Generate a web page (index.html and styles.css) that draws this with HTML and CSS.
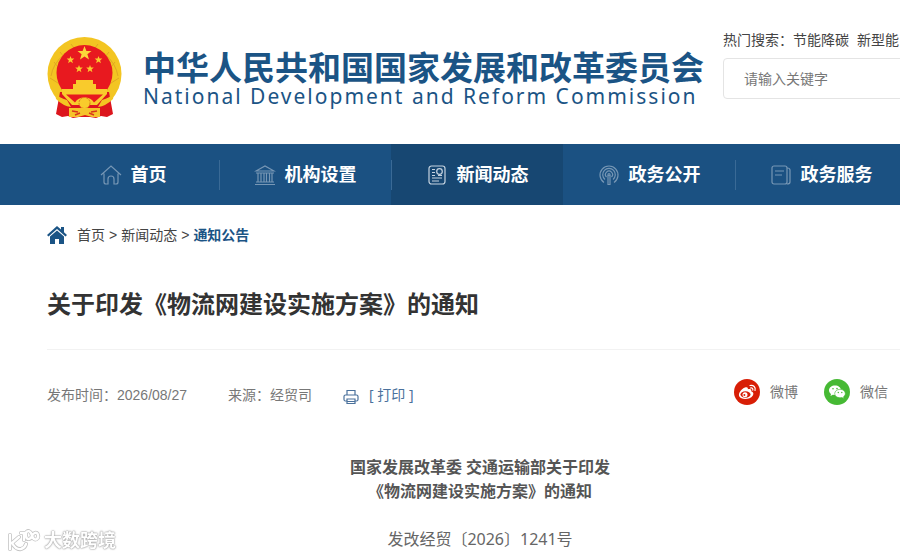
FILE: index.html
```html
<!DOCTYPE html>
<html lang="zh-CN">
<head>
    <meta charset="UTF-8">
    <meta name="viewport" content="width=device-width, initial-scale=1.0">
    <title>关于印发《物流网建设实施方案》的通知</title>
    <link rel="stylesheet" href="styles.css">
</head>
<body>
    <header class="header">
        <div class="brand">
            <svg class="emblem" viewBox="0 0 76 84" aria-hidden="true">
                <circle cx="37.500" cy="38" r="37" fill="#f3c522"/>
                <path d="M4 40A34 34 0 0 1 71 40M7 26l4 5M13 16l4 5M24 8l3 4M68 26l-4 5M62 16l-4 5M51 8l-3 4M3 42l8 5M72 42l-8 5" fill="none" stroke="#e0a822"/>
                <path d="M13 56l-4 22 6 3 6-1 5 2 6-1h11l6 1 5-2 6 1 6-3-4-22z" fill="#dc151d"/>
                <circle cx="37.500" cy="37" r="28" fill="#e8191f"/>
                <path d="M37.500 10l1.900 5h5.100l-4.100 3.300 1.600 5.100-4.500-3-4.500 3 1.600-5.100-4.100-3.300h5.100z" fill="#fbd63a"/>
                <g fill="#fbc92f">
                    <path id="star" d="M23.500 20l1 2.600h2.800l-2.200 1.800.8 2.800-2.400-1.600-2.400 1.600.8-2.800-2.200-1.800h2.800z"/>
                    <use href="#star" x="28"/>
                    <use href="#star" x="8.500" y="9"/>
                    <use href="#star" x="19.500" y="9"/>
                </g>
                <path d="M29 44h17v4h3v5h11v5l-10 11H25L15 58v-5h11v-5h3z" fill="#f9cb2c"/>
                <path d="M19 58.500h37l-9 8q-3-5-9.500-5T28 66.500z" fill="#e8191f"/>
                <circle cx="37.500" cy="67" r="5.500" fill="#f9cb2c" stroke="#dc7b1a" stroke-dasharray="2 1"/>
                <path d="M8 57q4 5 12 7l4 7q-8-1-15-8zM67 57q-4 5-12 7l-4 7q8-1 15-8z" fill="#f3c522"/>
                <path d="M22 72h31v9h-8l-7-2-7 2h-9z" fill="#f6c42b"/>
                <path d="M25 75l6 1M50 75l-6 1M28 79l5-2M47 79l-5-2" stroke="#d8361c" stroke-width="1.500"/>
            </svg>
            <div class="brand-text">
                <div class="brand-zh">中华人民共和国国家发展和改革委员会</div>
                <div class="brand-en">National Development and Reform Commission</div>
            </div>
        </div>
        <form class="search">
            <div class="hot">
                <label for="keyword">热门搜索：</label>
                <a href="#">节能降碳</a>
                <a href="#">新型能</a>
            </div>
            <input type="text" id="keyword" class="search-input" placeholder="请输入关键字">
        </form>
    </header>

    <nav class="nav">
        <a class="nav-item" href="#">
            <svg class="nav-icon" viewBox="0 0 22 22"><path d="M1 11L11 2l10 9M4 9.500V18q0 2 2 2h2v-5q0-3 3-3t3 3v5h2q2 0 2-2V9.500"/></svg>
            首页
        </a>
        <a class="nav-item" href="#">
            <svg class="nav-icon" viewBox="0 0 22 22"><path d="M2 7l9-5 9 5zM2 9h18M4 9v9M7 9v9M10 9v9M12.500 9v9M15.500 9v9M18 9v9M2 18h18M1 20.500h20"/></svg>
            机构设置
        </a>
        <a class="nav-item active" href="#">
            <svg class="nav-icon" viewBox="0 0 22 22"><rect x="3" y="2" width="16" height="18" rx="2.500"/><circle cx="13.500" cy="7.500" r="2.800"/><path d="M6 5.500h3M6 8.500h3M6 11.500h3M12 11.500h4M6 14h10M6 17h7"/></svg>
            新闻动态
        </a>
        <a class="nav-item" href="#">
            <svg class="nav-icon" viewBox="0 0 22 22"><path d="M6 18.500a9 9 0 1 1 10 0M7 15.500a6.300 6.300 0 1 1 8 0M8.500 13a3.500 3.500 0 1 1 5 0M10 11v9.500h2V11"/><circle cx="11" cy="10.500" r="1"/></svg>
            政务公开
        </a>
        <a class="nav-item" href="#">
            <svg class="nav-icon" viewBox="0 0 22 22"><rect x="2" y="2" width="15" height="18" rx="2"/><path d="M17 4q3 0 3 2v12q0 2-3 2M5 7h9M5 11h7"/></svg>
            政务服务
        </a>
    </nav>

    <main class="main">
        <div class="crumbs">
            <svg class="crumb-icon" viewBox="0 0 20 18" aria-hidden="true"><path d="M10 0l4 3.500V1h3v5.200l3 2.800-1.500 1.500L10 3 1.500 10.500 0 9z"/><path d="M10 4.500l7 6V18h-5v-5H8v5H3v-7.500z"/></svg>
            <a href="#">首页</a>
            <span>&gt;</span>
            <a href="#">新闻动态</a>
            <span>&gt;</span>
            <a class="current" href="#">通知公告</a>
        </div>

        <h1 class="title">关于印发《物流网建设实施方案》的通知</h1>

        <div class="meta">
            <span class="date">发布时间：2026/08/27</span>
            <span class="source">来源：经贸司</span>
            <button class="print" type="button">
                <svg class="print-icon" viewBox="0 0 16 16"><path d="M4 6V1.500h8V6M4 12H2.500Q1 12 1 10.500v-3Q1 6 2.500 6h11Q15 6 15 7.500v3q0 1.500-1.500 1.500H12"/><path d="M4 10h8v4.500H4zM4 12.500h8"/></svg>
                [ 打印 ]
            </button>
            <div class="share">
                <a href="#">
                    <svg class="share-icon" viewBox="0 0 26 26">
                        <circle cx="13" cy="13" r="13" fill="#d81e06"/>
                        <path d="M11 8.500c2-.8 3.300 0 2.800 1.800 2.700-.8 4 .2 3.400 2 2.300.8 2.800 2.600 1.500 4.400-2.700 4-11.500 4.500-13.500.5C4 14.200 7.500 9.800 11 8.500z" fill="#fff"/>
                        <ellipse cx="11.500" cy="15.500" rx="5" ry="3.300" fill="#d81e06"/>
                        <circle cx="11" cy="15.700" r="2.500" fill="#fff"/>
                        <circle cx="10.400" cy="16" r="1" fill="#d81e06"/>
                        <path d="M16 6.500c3.500-.8 6 1.800 5 5M16.500 9c1.700-.3 2.700.7 2.300 2.200" fill="none" stroke="#fff" stroke-width="1.200" stroke-linecap="round"/>
                    </svg>
                    微博
                </a>
                <a href="#">
                    <svg class="share-icon" viewBox="0 0 26 26">
                        <circle cx="13" cy="13" r="13" fill="#46b934"/>
                        <path d="M11 6.500c3.400 0 6 2.100 6 4.800s-2.600 4.800-6 4.800l-2.200-.3L6.500 17l.5-2c-1.300-1-2-2.200-2-3.700 0-2.700 2.600-4.800 6-4.800z" fill="#fff"/>
                        <path d="M16 10.300c3 0 5.300 1.900 5.300 4.300 0 1.300-.7 2.400-1.800 3.200l.4 1.700-2-1-1.900.3c-3 0-5.300-1.900-5.300-4.200s2.300-4.300 5.300-4.300z" fill="#fff" stroke="#46b934" stroke-width=".6"/>
                        <g fill="#46b934"><circle cx="9" cy="9.800" r=".8"/><circle cx="13" cy="9.600" r=".8"/><circle cx="14.300" cy="13.500" r=".7"/><circle cx="17.800" cy="13.500" r=".7"/></g>
                    </svg>
                    微信
                </a>
            </div>
        </div>

        <article class="article">
            <p class="article-head">国家发展改革委 交通运输部关于印发<br>《物流网建设实施方案》的通知</p>
            <p class="doc-no">发改经贸〔2026〕1241号</p>
        </article>
    </main>

    <div class="watermark">
        <svg class="watermark-icon" viewBox="0 0 34 24" aria-hidden="true">
            <g fill="none" stroke-linecap="round">
                <path d="M3 6v14M12 8l-7 6q4 7 9 6 4-1 5-5M14 4h3v7M24 4c-3-4-6-1-5 3 1 5 5 3 6 0s5-5 6-1-3 6-5 3z" stroke="#c4c4c4" stroke-width="4"/>
                <path d="M3 6v14M12 8l-7 6q4 7 9 6 4-1 5-5M14 4h3v7M24 4c-3-4-6-1-5 3 1 5 5 3 6 0s5-5 6-1-3 6-5 3z" stroke="#fff" stroke-width="2.400"/>
            </g>
        </svg>
        大数跨境
    </div>
</body>
</html>
```
FILE: styles.css
```css
* {
    margin: 0;
    padding: 0;
    box-sizing: border-box;
}

body {
    background: #fff;
    color: #666;
    font-family: 'Liberation Sans', 'Noto Sans CJK SC', sans-serif;
    font-size: 14px;
    line-height: 20px;
    min-height: 100vh;
    overflow-x: hidden;
}

a {
    color: inherit;
    text-decoration: none;
}

.header {
    display: flex;
    align-items: flex-start;
    gap: 19px;
    height: 144px;
    padding: 30px 0 0 47px;
    overflow: hidden;
}

.brand {
    display: flex;
    flex: none;
    gap: 20px;
    padding-top: 6px;
}

.emblem {
    width: 76px;
    height: 84px;
}

.brand-text {
    padding-top: 17px;
    color: #1b5485;
    white-space: nowrap;
}

.brand-zh {
    font-size: 33px;
    font-weight: bold;
    line-height: 32px;
}

.brand-en {
    font-family: 'Noto Sans', sans-serif;
    font-size: 21px;
    line-height: 22px;
    letter-spacing: 2px;
}

.search {
    flex: none;
    width: 300px;
}

.hot {
    display: flex;
    color: #444;
    white-space: nowrap;
}

.hot a + a {
    margin-left: 8px;
}

.search-input {
    width: 100%;
    height: 41px;
    margin-top: 8px;
    padding: 0 20px;
    border: 1px solid #e4e4e4;
    border-radius: 4px;
    color: #666;
    font: inherit;
}

.search-input::placeholder {
    color: #777;
}

.nav {
    display: flex;
    height: 61px;
    padding-left: 47px;
    background: #1b5182;
    overflow: hidden;
}

.nav-item {
    position: relative;
    display: flex;
    flex: 1 0 172px;
    align-items: center;
    justify-content: center;
    gap: 9px;
    color: #fff;
    font-size: 18px;
    font-weight: bold;
    white-space: nowrap;
}

.nav-item + .nav-item::before {
    content: '';
    position: absolute;
    left: 0;
    width: 1px;
    height: 30px;
    background: #3a6a96;
}

.nav-item.active {
    background: #174772;
}

.nav-item.active + .nav-item::before {
    display: none;
}

.nav-icon {
    width: 22px;
    height: 22px;
    fill: none;
    stroke: #7797b5;
    stroke-width: 1.2;
}

.active .nav-icon {
    stroke: #c5d3e0;
}

.main {
    padding: 20px 0 0 47px;
}

.crumbs {
    display: flex;
    align-items: center;
    gap: 4px;
    color: #444;
}

.crumb-icon {
    width: 20px;
    height: 18px;
    margin-right: 6px;
    fill: #1b5485;
}

.crumbs .current {
    color: #1b5485;
    font-weight: bold;
}

.title {
    margin-top: 40px;
    padding-bottom: 24px;
    border-bottom: 1px solid #f2f2f2;
    color: #333;
    font-size: 24px;
    line-height: 40px;
}

.meta {
    display: flex;
    align-items: flex-end;
    margin-top: 29px;
    padding-right: 12px;
    color: #777;
}

.source {
    margin-left: 41px;
}

.print {
    display: flex;
    align-items: flex-end;
    gap: 10px;
    margin-left: 31px;
    border: none;
    background: none;
    color: #4a719c;
    font-family: 'Noto Sans', 'Noto Sans CJK SC', sans-serif;
    font-size: 14px;
    line-height: 20px;
    cursor: pointer;
}

.print-icon {
    width: 16px;
    height: 16px;
    fill: none;
    stroke: #4a719c;
    stroke-width: 1.2;
}

.share {
    display: flex;
    gap: 26px;
    margin-left: auto;
}

.share a {
    display: flex;
    align-items: center;
    gap: 10px;
}

.share-icon {
    width: 26px;
    height: 26px;
}

.article {
    padding: 50px 0 0 13px;
    color: #666;
    font-family: 'Noto Sans', 'Noto Sans CJK SC', sans-serif;
    font-size: 16px;
    line-height: 24px;
    text-align: center;
}

.article-head {
    color: #555;
    font-weight: bold;
}

.doc-no {
    margin-top: 24px;
}

.watermark {
    position: fixed;
    left: 7px;
    bottom: 4px;
    display: flex;
    align-items: center;
    gap: 3px;
    color: #fff;
    font-size: 18px;
    font-weight: bold;
    line-height: 24px;
    text-shadow: 0 0 1px #999, 0 0 2px #aaa, 0 0 2px #bbb;
}

.watermark-icon {
    width: 34px;
    height: 24px;
}
```
